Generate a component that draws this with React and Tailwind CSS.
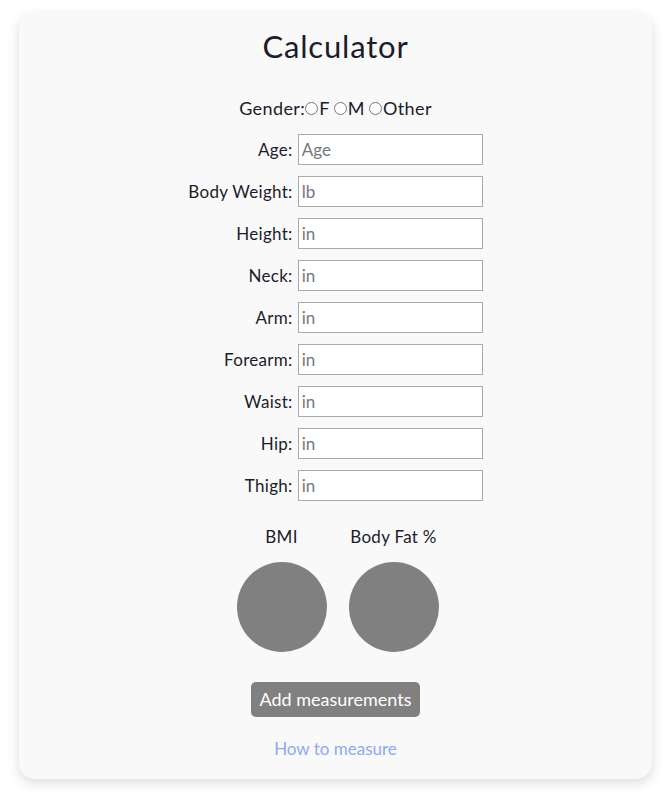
import { useState } from 'react';

const fields = [
  { label: 'Age', placeholder: 'Age' },
  { label: 'Body Weight', placeholder: 'lb' },
  { label: 'Height', placeholder: 'in' },
  { label: 'Neck', placeholder: 'in' },
  { label: 'Arm', placeholder: 'in' },
  { label: 'Forearm', placeholder: 'in' },
  { label: 'Waist', placeholder: 'in' },
  { label: 'Hip', placeholder: 'in' },
  { label: 'Thigh', placeholder: 'in' },
];

const App = () => {
  const [gender, setGender] = useState('');

  return (
    <div className="min-h-screen w-full bg-white px-[19px] pt-[13px] pb-6" style={{ fontFamily: 'Lato, "Open Sans", sans-serif' }}>
      <div className="rounded-2xl bg-[#f9f9fa] shadow-[0_4px_12px_rgba(60,60,90,0.18)] pt-[19px] pb-[17px] text-[#1c1c2a]">
        <h1 className="text-center text-[31px] leading-[28px] tracking-[0.8px]">Calculator</h1>

        {/* Gender */}
        <div className="mt-[38px] flex items-center justify-center text-[18px] leading-5 tracking-[0.4px]">
          <span>Gender:</span>
          {['F', 'M', 'Other'].map((g, i) => (
            <label key={g} className={`flex items-center ${i > 0 ? 'ml-[4px]' : ''}`}>
              <input
                type="radio"
                name="gender"
                checked={gender === g}
                onChange={() => setGender(g)}
                className="m-0 mr-[1px] h-[13px] w-[13px] accent-gray-500"
              />
              <span>{g}</span>
            </label>
          ))}
        </div>

        {/* Measurements */}
        <div className="mx-auto mt-[16px] grid w-fit grid-cols-[auto_185px] items-center gap-x-[5px] gap-y-[11px]">
          {fields.map(f => (
            <div key={f.label} className="contents">
              <label className="text-right text-[17px] tracking-[0.3px]">{f.label}:</label>
              <input
                type="text"
                placeholder={f.placeholder}
                className="h-[31px] w-[185px] border border-[#aaaaaa] bg-white px-[3px] text-[17px] placeholder:text-[#777777] focus:outline-none"
              />
            </div>
          ))}
        </div>

        {/* Results */}
        <div className="mt-[26px] flex justify-center gap-[22px] pl-[4px]">
          <div className="flex w-[90px] flex-col items-center">
            <span className="text-[17px] leading-5 tracking-[0.3px]">BMI</span>
            <div className="mt-[15px] h-[90px] w-[90px] rounded-full bg-[#808080]" />
          </div>
          <div className="flex w-[90px] flex-col items-center">
            <span className="whitespace-nowrap text-[17px] leading-5 tracking-[0.3px]">Body Fat %</span>
            <div className="mt-[15px] h-[90px] w-[90px] rounded-full bg-[#808080]" />
          </div>
        </div>

        <div className="mt-[30px] flex flex-col items-center">
          <button className="h-[35px] rounded-[5px] bg-[#808080] px-[8px] text-[18px] text-white">
            Add measurements
          </button>
          <a href="#" className="mt-[19px] text-[17px] text-[#8fa8f8]">How to measure</a>
        </div>
      </div>
    </div>
  );
};

export default App;
